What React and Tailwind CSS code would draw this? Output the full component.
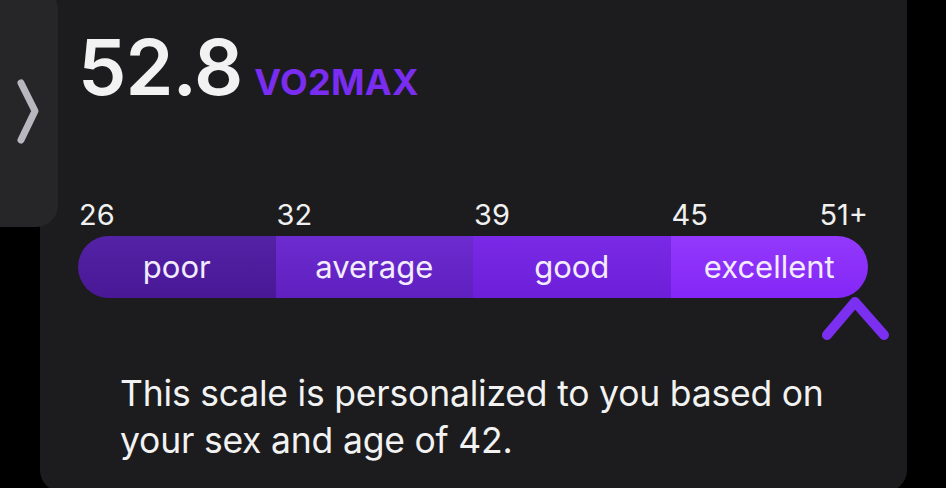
import React from 'react';

const segments = [
  { name: 'poor', tick: '26', cls: 'bg-gradient-to-b from-[#5422a6] to-[#481896] rounded-l-full' },
  { name: 'average', tick: '32', cls: 'bg-gradient-to-b from-[#6c2bce] to-[#6020c0]' },
  { name: 'good', tick: '39', cls: 'bg-gradient-to-b from-[#7a2ae6] to-[#6d1ed8]' },
  { name: 'excellent', tick: '45', cls: 'bg-gradient-to-b from-[#9338fc] to-[#8426f6] rounded-r-full' },
];

export default function App() {
  return (
    <div
      className="relative w-[946px] h-[488px] overflow-hidden bg-black text-white"
      style={{ fontFamily: 'Inter, "Noto Sans", sans-serif' }}
    >
      {/* card */}
      <div className="absolute left-[40px] top-[-20px] w-[867px] h-[512px] rounded-[22px] bg-[#1c1c1e] pt-[49px] pl-[38px]">
        {/* value */}
        <div className="flex items-baseline">
          <span className="text-[77px] font-semibold leading-none tracking-[-1px] text-[#f2f2f2]">52.8</span>
          <span className="ml-[12px] text-[36px] font-bold leading-none tracking-[0.3px] text-[#7a2cf0]">VO2MAX</span>
        </div>

        {/* scale */}
        <div className="relative mt-[94px] w-[790px]">
          <div className="grid grid-cols-4 h-[30px] text-[29px] leading-[30px] text-[#f0f0f0]">
            {segments.map((s, i) => (
              <div key={s.tick} className="flex justify-between pl-[1px]">
                <span>{s.tick}</span>
                {i === 3 && <span>51+</span>}
              </div>
            ))}
          </div>
          <div className="flex h-[62px] mt-[6px]">
            {segments.map(s => (
              <div
                key={s.name}
                className={`flex-1 flex items-center justify-center text-[31px] text-[#f3ecff] ${s.cls}`}
              >
                {s.name}
              </div>
            ))}
          </div>
          {/* marker */}
          <svg className="absolute left-[742px] top-[96px]" width="72" height="46" viewBox="0 0 72 46">
            <polyline
              points="7,39 35,6 64,39"
              fill="none"
              stroke="#7b2ff0"
              strokeWidth="10"
              strokeLinecap="round"
              strokeLinejoin="round"
            />
          </svg>
        </div>

        <p className="mt-[72px] ml-[42px] w-[740px] text-[35.5px] leading-[47px] tracking-[-0.2px] text-[#f2f2f2]">
          This scale is personalized to you based on your sex and age of 42.
        </p>
      </div>

      {/* side handle */}
      <div className="absolute left-0 top-[-12px] w-[58px] h-[239px] rounded-r-[22px] bg-[#262628] flex items-center justify-center">
        <svg className="mt-[9px]" width="26" height="68" viewBox="0 0 26 68">
          <polyline
            points="5,5 19,33 5,62"
            fill="none"
            stroke="#b8b7bf"
            strokeWidth="7"
            strokeLinecap="round"
            strokeLinejoin="round"
          />
        </svg>
      </div>
    </div>
  );
}
